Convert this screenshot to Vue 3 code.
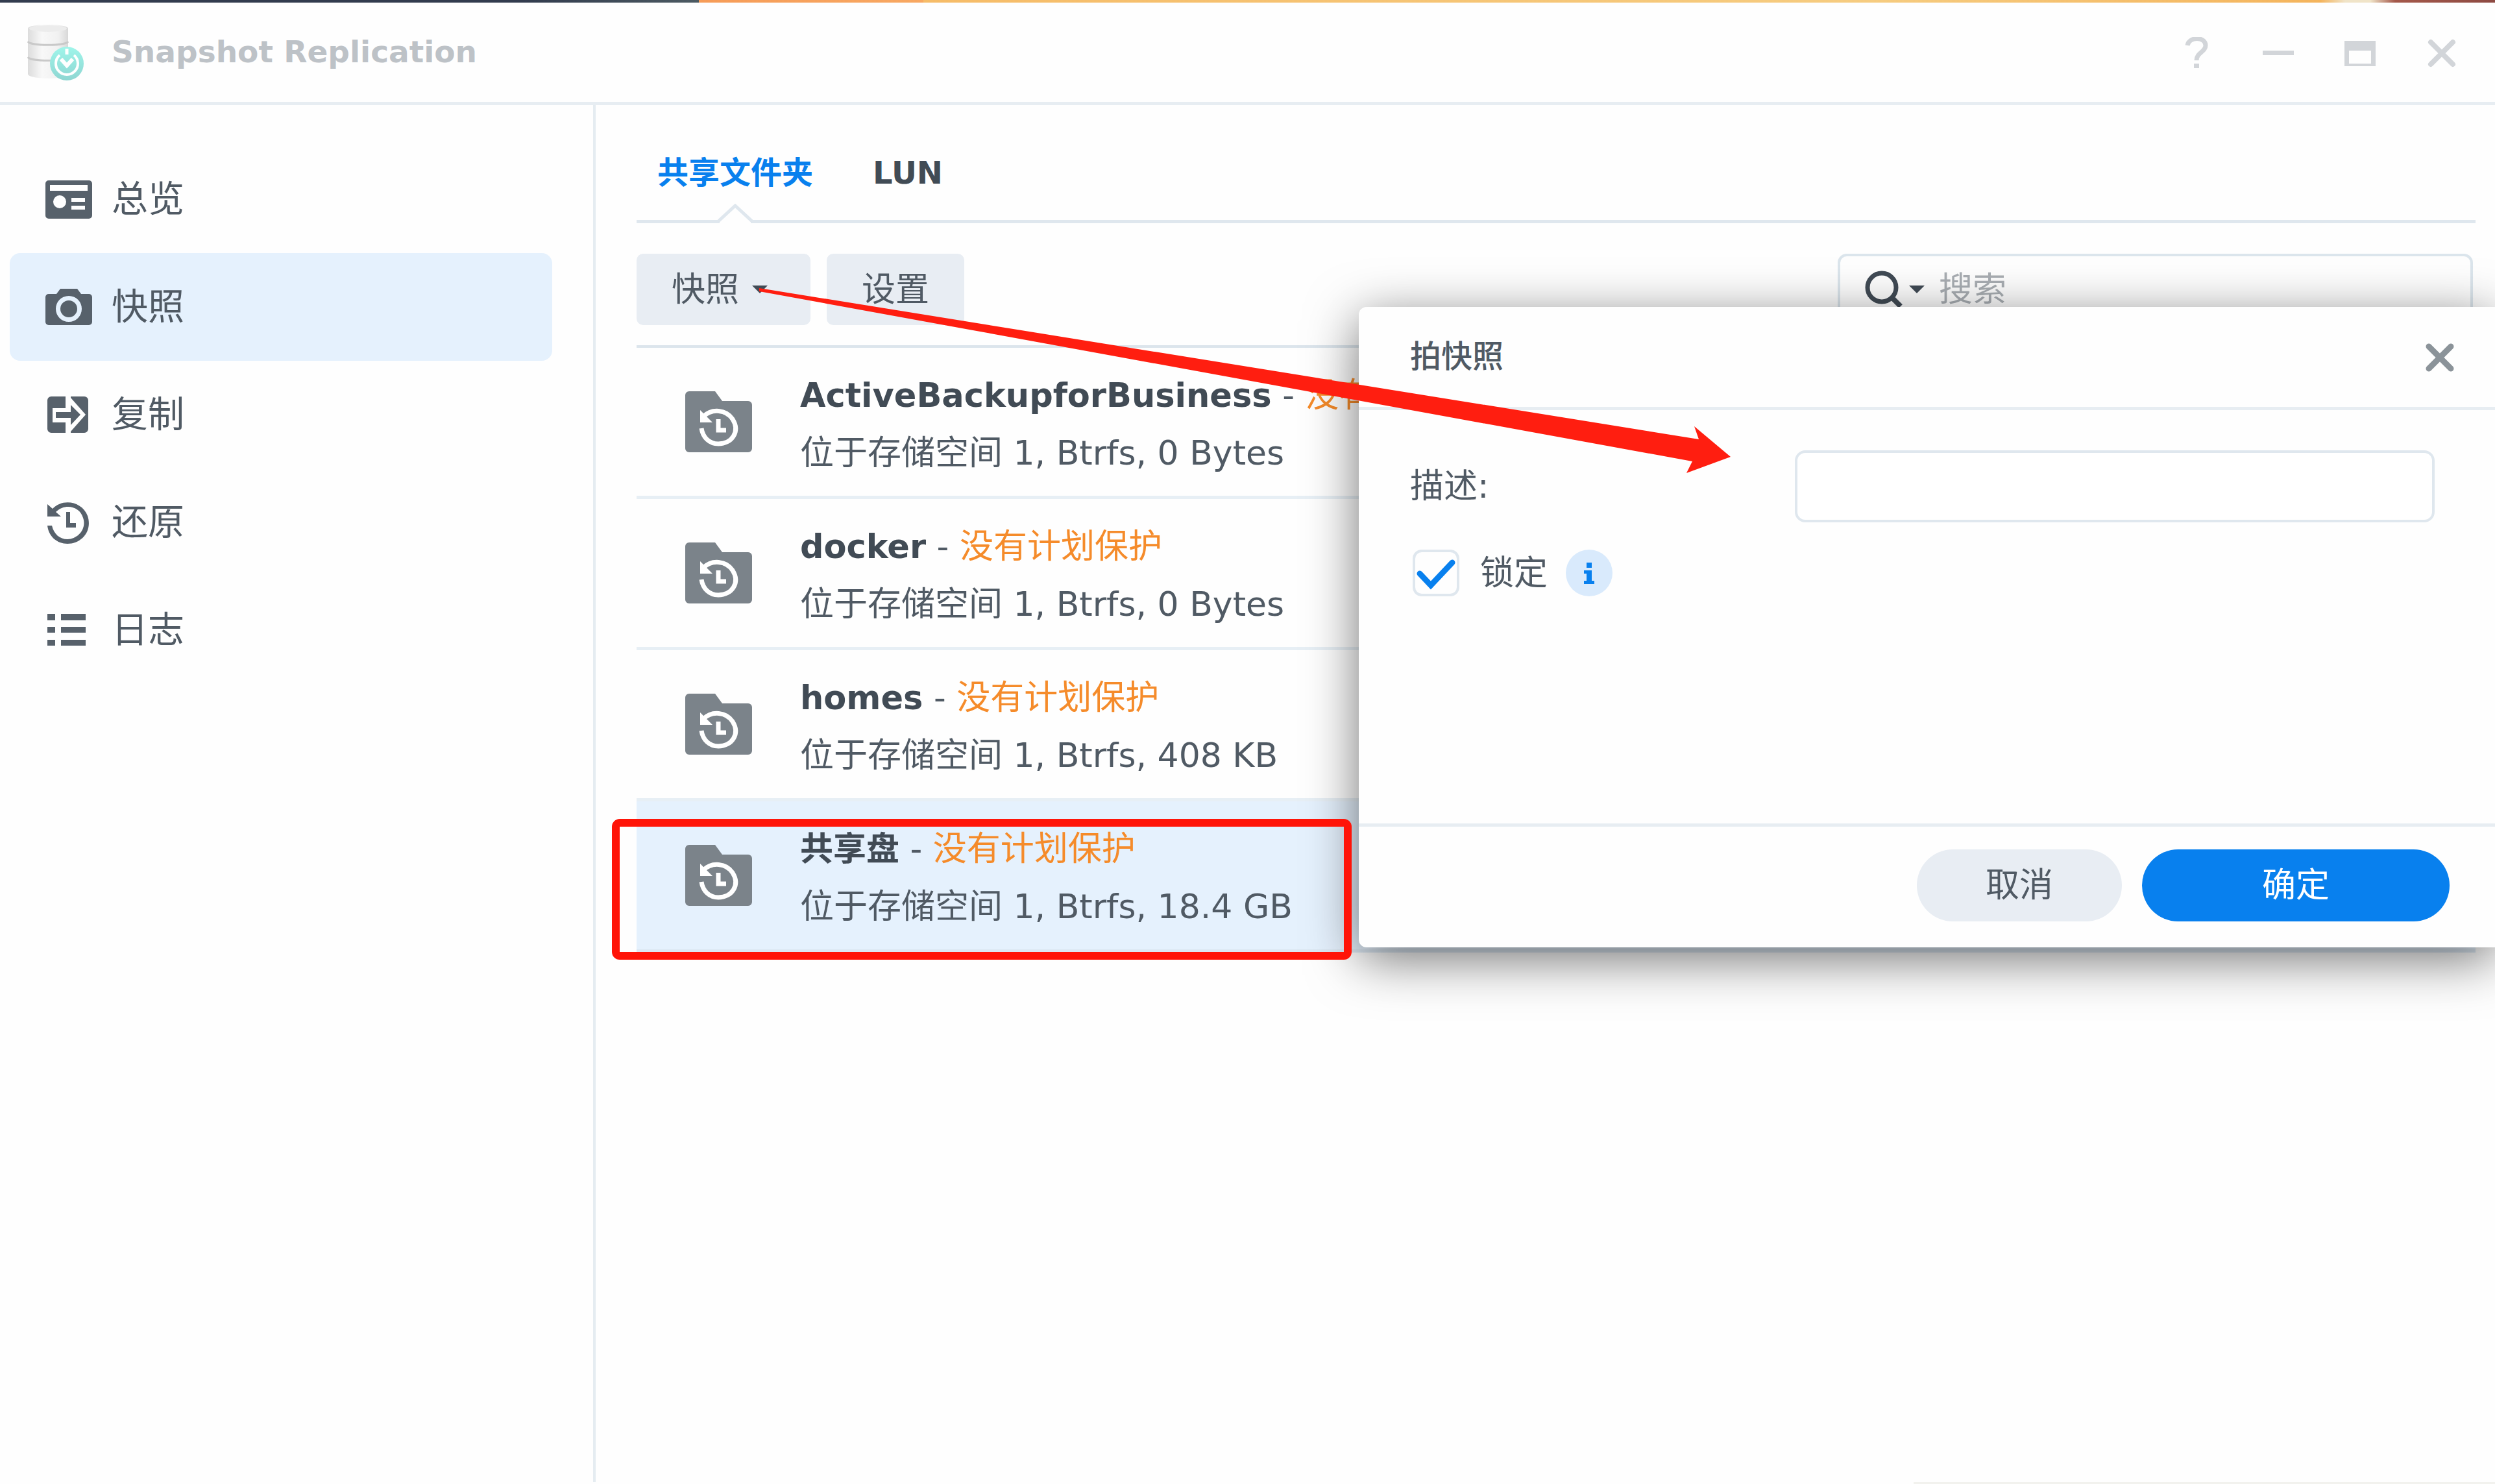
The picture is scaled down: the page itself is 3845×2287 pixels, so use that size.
<template>
  <div class="desktop">
    <div class="wallpaper"></div>

    <header class="titlebar">
      <svg class="titlebar__logo" viewBox="0 0 88 88" aria-hidden="true">
        <defs>
          <linearGradient id="disk" x1="0" x2="1" y1="0" y2="0">
            <stop offset="0" stop-color="#dcdcdc" />
            <stop offset="0.35" stop-color="#f8f8f8" />
            <stop offset="0.75" stop-color="#f1f1f1" />
            <stop offset="1" stop-color="#d8d8d8" />
          </linearGradient>
          <linearGradient id="badge" x1="0" x2="0" y1="0" y2="1">
            <stop offset="0" stop-color="#9ff5ea" />
            <stop offset="1" stop-color="#8fd6d2" />
          </linearGradient>
        </defs>
        <path d="M1 7c0-8 62-8 62 0v70c0 9-62 9-62 0z" fill="url(#disk)" />
        <ellipse cx="32" cy="7" rx="29" ry="5" fill="#ececec" />
        <path d="M1 27c4 7 58 7 62 0M1 51c4 7 58 7 62 0" fill="none" stroke="#c9c9c9" stroke-width="3" />
        <circle cx="61" cy="61" r="26" fill="url(#badge)" />
        <path d="M50 48a17 17 0 1 0 22 0" fill="none" stroke="#fff" stroke-width="4" />
        <path d="M52 54l9 10 9-10" fill="none" stroke="#fff" stroke-width="6" />
        <path d="M61 38v9" stroke="#fff" stroke-width="5" />
      </svg>
      <h1 class="titlebar__name">Snapshot Replication</h1>
      <div class="titlebar__controls">
        <button type="button" class="icon-btn" aria-label="帮助">
          <svg viewBox="0 0 48 48">
            <path d="M10 13C12-1 38-1 38 13c0 10-14 11-14 23" fill="none" stroke="currentColor" stroke-width="7" />
            <rect x="20" y="41" width="8" height="7" fill="currentColor" />
          </svg>
        </button>
        <button type="button" class="icon-btn" aria-label="最小化">
          <svg viewBox="0 0 48 48"><rect y="21" width="48" height="7" fill="currentColor" /></svg>
        </button>
        <button type="button" class="icon-btn" aria-label="最大化">
          <svg viewBox="0 0 48 48"><path d="M0 6h48v39H0zM7 21v20h34V21z" fill="currentColor" fill-rule="evenodd" /></svg>
        </button>
        <button type="button" class="icon-btn" aria-label="关闭">
          <svg viewBox="0 0 48 48"><path d="M7 8l34 34M41 8L7 42" stroke="currentColor" stroke-width="8" stroke-linecap="round" /></svg>
        </button>
      </div>
    </header>

    <div class="layout">
      <nav class="sidebar">
        <a
          v-for="item in menu"
          :key="item.id"
          href="#"
          class="sidebar__item"
          :class="{ 'sidebar__item--active': item.id === current }"
          @click.prevent="current = item.id"
        >
          <svg class="sidebar__icon" viewBox="0 0 72 72" aria-hidden="true">
            <path :d="item.icon" fill="currentColor" fill-rule="evenodd" />
          </svg>
          <span>{{ item.title }}</span>
        </a>
      </nav>

      <main class="content">
        <div class="tabs">
          <a href="#" class="tabs__item tabs__item--active">
            共享文件夹
            <svg class="tabs__notch" viewBox="0 0 54 30" aria-hidden="true">
              <path d="M3 25h48v5H3z" fill="#fefefe" />
              <path d="M1 27L27 3l26 24" fill="none" stroke="#dfe7ee" stroke-width="5" />
            </svg>
          </a>
          <a href="#" class="tabs__item">LUN</a>
        </div>

        <div class="toolbar">
          <button type="button" class="tool-btn tool-btn--menu">快照<span class="caret"></span></button>
          <button type="button" class="tool-btn">设置</button>
          <div class="search">
            <svg class="search__icon" viewBox="0 0 58 58" aria-hidden="true">
              <circle cx="26" cy="26" r="22" fill="none" stroke="currentColor" stroke-width="7" />
              <path d="M42 42l13 13" stroke="currentColor" stroke-width="8" />
            </svg>
            <span class="caret"></span>
            <input v-model="keyword" class="search__input" type="text" placeholder="搜索" aria-label="搜索" />
          </div>
        </div>

        <ul class="shares">
          <li
            v-for="share in shares"
            :key="share.name"
            class="share"
            :class="{ 'share--selected': share.selected }"
          >
            <svg class="share__icon" viewBox="0 0 103 94" aria-hidden="true">
              <path d="M6 0h40l11 15h40a6 6 0 0 1 6 6v67a6 6 0 0 1-6 6H6a6 6 0 0 1-6-6V6a6 6 0 0 1 6-6z" fill="#7b838a" />
              <path d="M28 39c13-13 35-11 45 4 12 19-1 38-22 38-14 0-24-10-26-24" fill="none" stroke="#fff" stroke-width="7" />
              <path d="M23 29v19h19z" fill="#fff" />
              <path d="M51 43v17h12" fill="none" stroke="#fff" stroke-width="7" />
            </svg>
            <div class="share__text">
              <div class="share__title">
                <strong>{{ share.name }}</strong> - <span class="share__warning">没有计划保护</span>
              </div>
              <div>位于存储空间 1, Btrfs, {{ share.size }}</div>
            </div>
          </li>
        </ul>
      </main>
    </div>

    <div class="footer-line"></div>

    <form class="dialog" role="dialog" aria-labelledby="dialog-title" @submit.prevent>
      <div class="dialog__header">
        <h2 id="dialog-title" class="dialog__title">拍快照</h2>
        <button type="button" class="icon-btn icon-btn--dark" aria-label="关闭">
          <svg viewBox="0 0 48 48"><path d="M7 8l34 34M41 8L7 42" stroke="currentColor" stroke-width="9" stroke-linecap="round" /></svg>
        </button>
      </div>
      <div class="dialog__body">
        <div class="field">
          <label class="field__label" for="description">描述:</label>
          <input id="description" v-model="description" class="field__input" type="text" />
        </div>
        <div class="lock">
          <input id="lock" v-model="locked" class="lock__box" type="checkbox" />
          <label for="lock">锁定</label>
          <svg class="lock__info" viewBox="0 0 72 72" aria-hidden="true">
            <circle cx="36" cy="36" r="36" fill="#d9eafc" />
            <path d="M32 20h8v8h-8zM28 32h12v16h4v5H28v-5h4V37h-4z" fill="#0880ee" />
          </svg>
        </div>
      </div>
      <div class="dialog__footer">
        <button type="button" class="pill">取消</button>
        <button type="submit" class="pill pill--primary">确定</button>
      </div>
    </form>

    <!-- пометки поверх окна -->
    <div class="mark-box"></div>
    <svg class="mark-arrow" viewBox="0 0 1500 288" aria-hidden="true">
      <path d="M0 0L1448 233L1441 213L1497 260L1429 285L1438 267L0 5z" fill="#ff1e10" />
    </svg>
  </div>
</template>

<script setup>
import { ref } from 'vue';

const current = ref('snapshot');
const keyword = ref('');
const description = ref('');
const locked = ref(true);

const menu = [
  {
    id: 'overview',
    title: '总览',
    icon: 'M5 7h62a5 5 0 0 1 5 5v49a5 5 0 0 1-5 5H5a5 5 0 0 1-5-5V12a5 5 0 0 1 5-5zM7 14v9h58v-9zM22 30a10 10 0 1 0 0 20a10 10 0 1 0 0-20zM40 34v6h21v-6zM40 46v6h21v-6z',
  },
  {
    id: 'snapshot',
    title: '快照',
    icon: 'M23 8h26l6 8h12a5 5 0 0 1 5 5v38a5 5 0 0 1-5 5H5a5 5 0 0 1-5-5V21a5 5 0 0 1 5-5h12zM36 19a20 20 0 1 0 0 40a20 20 0 1 0 0-40zM36 26a13 13 0 1 1 0 26a13 13 0 1 1 0-26z',
  },
  {
    id: 'replication',
    title: '复制',
    icon: 'M9 8h22v18H11v22h20v16H9a6 6 0 0 1-6-6V14a6 6 0 0 1 6-6zM39 8h21a6 6 0 0 1 6 6v44a6 6 0 0 1-6 6H39v-2L62 36L39 10zM16 32h23V21l15 15l-15 16V41H16z',
  },
  {
    id: 'recovery',
    title: '还原',
    icon: 'M3 8L11 15C27-2 57 4 65 26C73 50 55 69 34 69C18 69 5 58 3 41H10C13 54 22 62 34 62C50 62 64 46 58 29C53 11 30 6 16 20L24 27H3zM32 20H38V37H47V44H32z',
  },
  {
    id: 'log',
    title: '日志',
    icon: 'M3 11h12v10H3zM24 11h38v10H24zM3 31h12v9H3zM24 31h38v9H24zM3 51h12v9H3zM24 51h38v9H24z',
  },
];

const shares = [
  { name: 'ActiveBackupforBusiness', size: '0 Bytes' },
  { name: 'docker', size: '0 Bytes' },
  { name: 'homes', size: '408 KB' },
  { name: '共享盘', size: '18.4 GB', selected: true },
];
</script>

<style>
body {
  margin: 0;
  background: #fefefe;
}
</style>

<style scoped>
* {
  box-sizing: border-box;
}

.desktop {
  position: relative;
  display: flex;
  flex-direction: column;
  min-height: 100vh;
  overflow: hidden;
  font-family: 'DejaVu Sans', 'Noto Sans CJK SC', sans-serif;
  font-size: 52px;
  line-height: 1.2;
  color: #505a64;
}

button,
input {
  font: inherit;
  color: inherit;
}

a {
  color: inherit;
  text-decoration: none;
}

.wallpaper {
  height: 4px;
  background: linear-gradient(90deg, #323c4e 0%, #323c4e 21%, #4c5a62 28%, #f69c58 28%, #f8a862 37%, #f6bc68 37%, #f6cc80 75%, #f4b45c 93%, #f0e4c8 94%, #f0e4c8 95%, #a4584a 96%, #8d4a42 100%);
}

.titlebar {
  display: flex;
  align-items: center;
  height: 158px;
  padding: 0 58px 0 42px;
  border-bottom: 5px solid #e7edf2;
}

.titlebar__logo {
  width: 88px;
  height: 88px;
}

.titlebar__name {
  margin: 0 0 0 42px;
  font-size: 47px;
  font-weight: 700;
  color: #bdc2c7;
}

.titlebar__controls {
  display: flex;
  gap: 78px;
  margin-left: auto;
  color: #d2d5d9;
}

.icon-btn {
  width: 48px;
  height: 48px;
  padding: 0;
  border: 0;
  background: none;
}

.icon-btn svg {
  display: block;
  width: 48px;
  height: 48px;
}

.icon-btn--dark {
  color: #8b9399;
}

.layout {
  display: flex;
  flex: 1;
}

.sidebar {
  flex: none;
  width: 918px;
  padding: 62px 63px 0 15px;
  border-right: 4px solid #e5ecf1;
}

.sidebar__item {
  display: flex;
  align-items: center;
  gap: 30px;
  height: 166px;
  padding-left: 55px;
  border-radius: 16px;
  font-size: 56px;
}

.sidebar__item--active {
  background: #e5f1fd;
}

.sidebar__icon {
  width: 72px;
  height: 72px;
  color: #57616b;
}

.content {
  flex: 1;
  padding: 50px 30px 0 63px;
}

.tabs {
  display: flex;
  gap: 92px;
  height: 132px;
  padding-left: 32px;
  border-bottom: 5px solid #dfe7ee;
  font-size: 48px;
  font-weight: 700;
  line-height: 108px;
  color: #414b55;
}

.tabs__item {
  position: relative;
}

.tabs__item--active {
  color: #0880ee;
}

.tabs__notch {
  position: absolute;
  bottom: -5px;
  left: 50%;
  width: 54px;
  margin-left: -27px;
}

.toolbar {
  display: flex;
  gap: 25px;
  padding: 47px 4px 31px 0;
}

.tool-btn {
  height: 110px;
  padding: 0 54px;
  border: 0;
  border-radius: 10px;
  background: #e8edf3;
}

.tool-btn--menu {
  display: flex;
  align-items: center;
  gap: 20px;
  padding-right: 66px;
}

.caret {
  border: 12px solid transparent;
  border-top-color: #414b55;
  border-bottom: 0;
}

.search {
  display: flex;
  align-items: center;
  gap: 10px;
  width: 979px;
  height: 110px;
  margin-left: auto;
  padding: 0 38px;
  border: 4px solid #dbe5ec;
  border-radius: 14px;
  color: #414b55;
}

.search__icon {
  flex: none;
  width: 58px;
  height: 58px;
}

.search__input {
  flex: 1;
  min-width: 0;
  padding: 0 12px;
  border: 0;
  outline: none;
  background: none;
}

.search__input::placeholder {
  color: #a9aeb3;
  opacity: 1;
}

.shares {
  margin: 0;
  padding: 0;
  border-top: 4px solid #dce5ec;
  list-style: none;
}

.share {
  display: flex;
  align-items: center;
  gap: 74px;
  height: 233px;
  padding-left: 75px;
  border-bottom: 5px solid #e7eff5;
  line-height: 88px;
}

.share--selected {
  background: #e5f1fd;
  border-color: #dce8f3;
}

.share__icon {
  width: 103px;
  height: 94px;
}

.share__text {
  height: 170px;
}

.share__title strong {
  font-size: 51px;
  color: #414b55;
}

.share__warning {
  color: #f58b2a;
}

.footer-line {
  align-self: flex-end;
  width: 896px;
  height: 3px;
  background: #f2f2ee;
}

.dialog {
  position: absolute;
  top: 473px;
  right: 0;
  width: 1751px;
  border-radius: 12px 0 0 12px;
  background: #fefefe;
  box-shadow: 0 18px 80px rgba(0, 0, 0, 0.55);
}

.dialog__header {
  display: flex;
  align-items: center;
  justify-content: space-between;
  height: 159px;
  padding: 0 61px 0 79px;
  border-bottom: 5px solid #e7edf2;
}

.dialog__title {
  margin: 0;
  font-size: 48px;
  font-weight: 500;
}

.dialog__body {
  min-height: 637px;
  padding: 62px 93px 0 79px;
}

.field {
  display: flex;
  align-items: center;
}

.field__label {
  width: 593px;
}

.field__input {
  flex: 1;
  height: 111px;
  padding: 0 32px;
  border: 4px solid #dfe7ee;
  border-radius: 16px;
  outline: none;
  background: #fff;
}

.lock {
  display: flex;
  align-items: center;
  gap: 28px;
  height: 72px;
  margin-top: 42px;
  padding-left: 4px;
}

.lock__box {
  width: 72px;
  height: 72px;
  margin: 0 4px 0 0;
  border: 4px solid #dfe7ee;
  border-radius: 14px;
  appearance: none;
}

.lock__box:checked {
  background: url("data:image/svg+xml,%3Csvg xmlns='http://www.w3.org/2000/svg' viewBox='0 0 64 64'%3E%3Cpath d='M7 33l17 18L57 16' fill='none' stroke='%230880ee' stroke-width='9' stroke-linecap='round'/%3E%3C/svg%3E") center / contain no-repeat;
}

.lock__info {
  width: 72px;
  height: 72px;
}

.dialog__footer {
  display: flex;
  justify-content: flex-end;
  gap: 31px;
  height: 191px;
  padding: 35px 70px 0;
  border-top: 5px solid #e7edf2;
}

.pill {
  width: 316px;
  height: 111px;
  padding: 0;
  border: 0;
  border-radius: 56px;
  background: #e8edf3;
}

.pill--primary {
  width: 474px;
  background: #0880ee;
  color: #fff;
}

.mark-box {
  position: absolute;
  top: 1262px;
  left: 943px;
  width: 1140px;
  height: 217px;
  border: 12px solid #ff1408;
  border-radius: 12px;
}

.mark-arrow {
  position: absolute;
  top: 444px;
  left: 1170px;
  width: 1500px;
  height: 288px;
}
</style>
